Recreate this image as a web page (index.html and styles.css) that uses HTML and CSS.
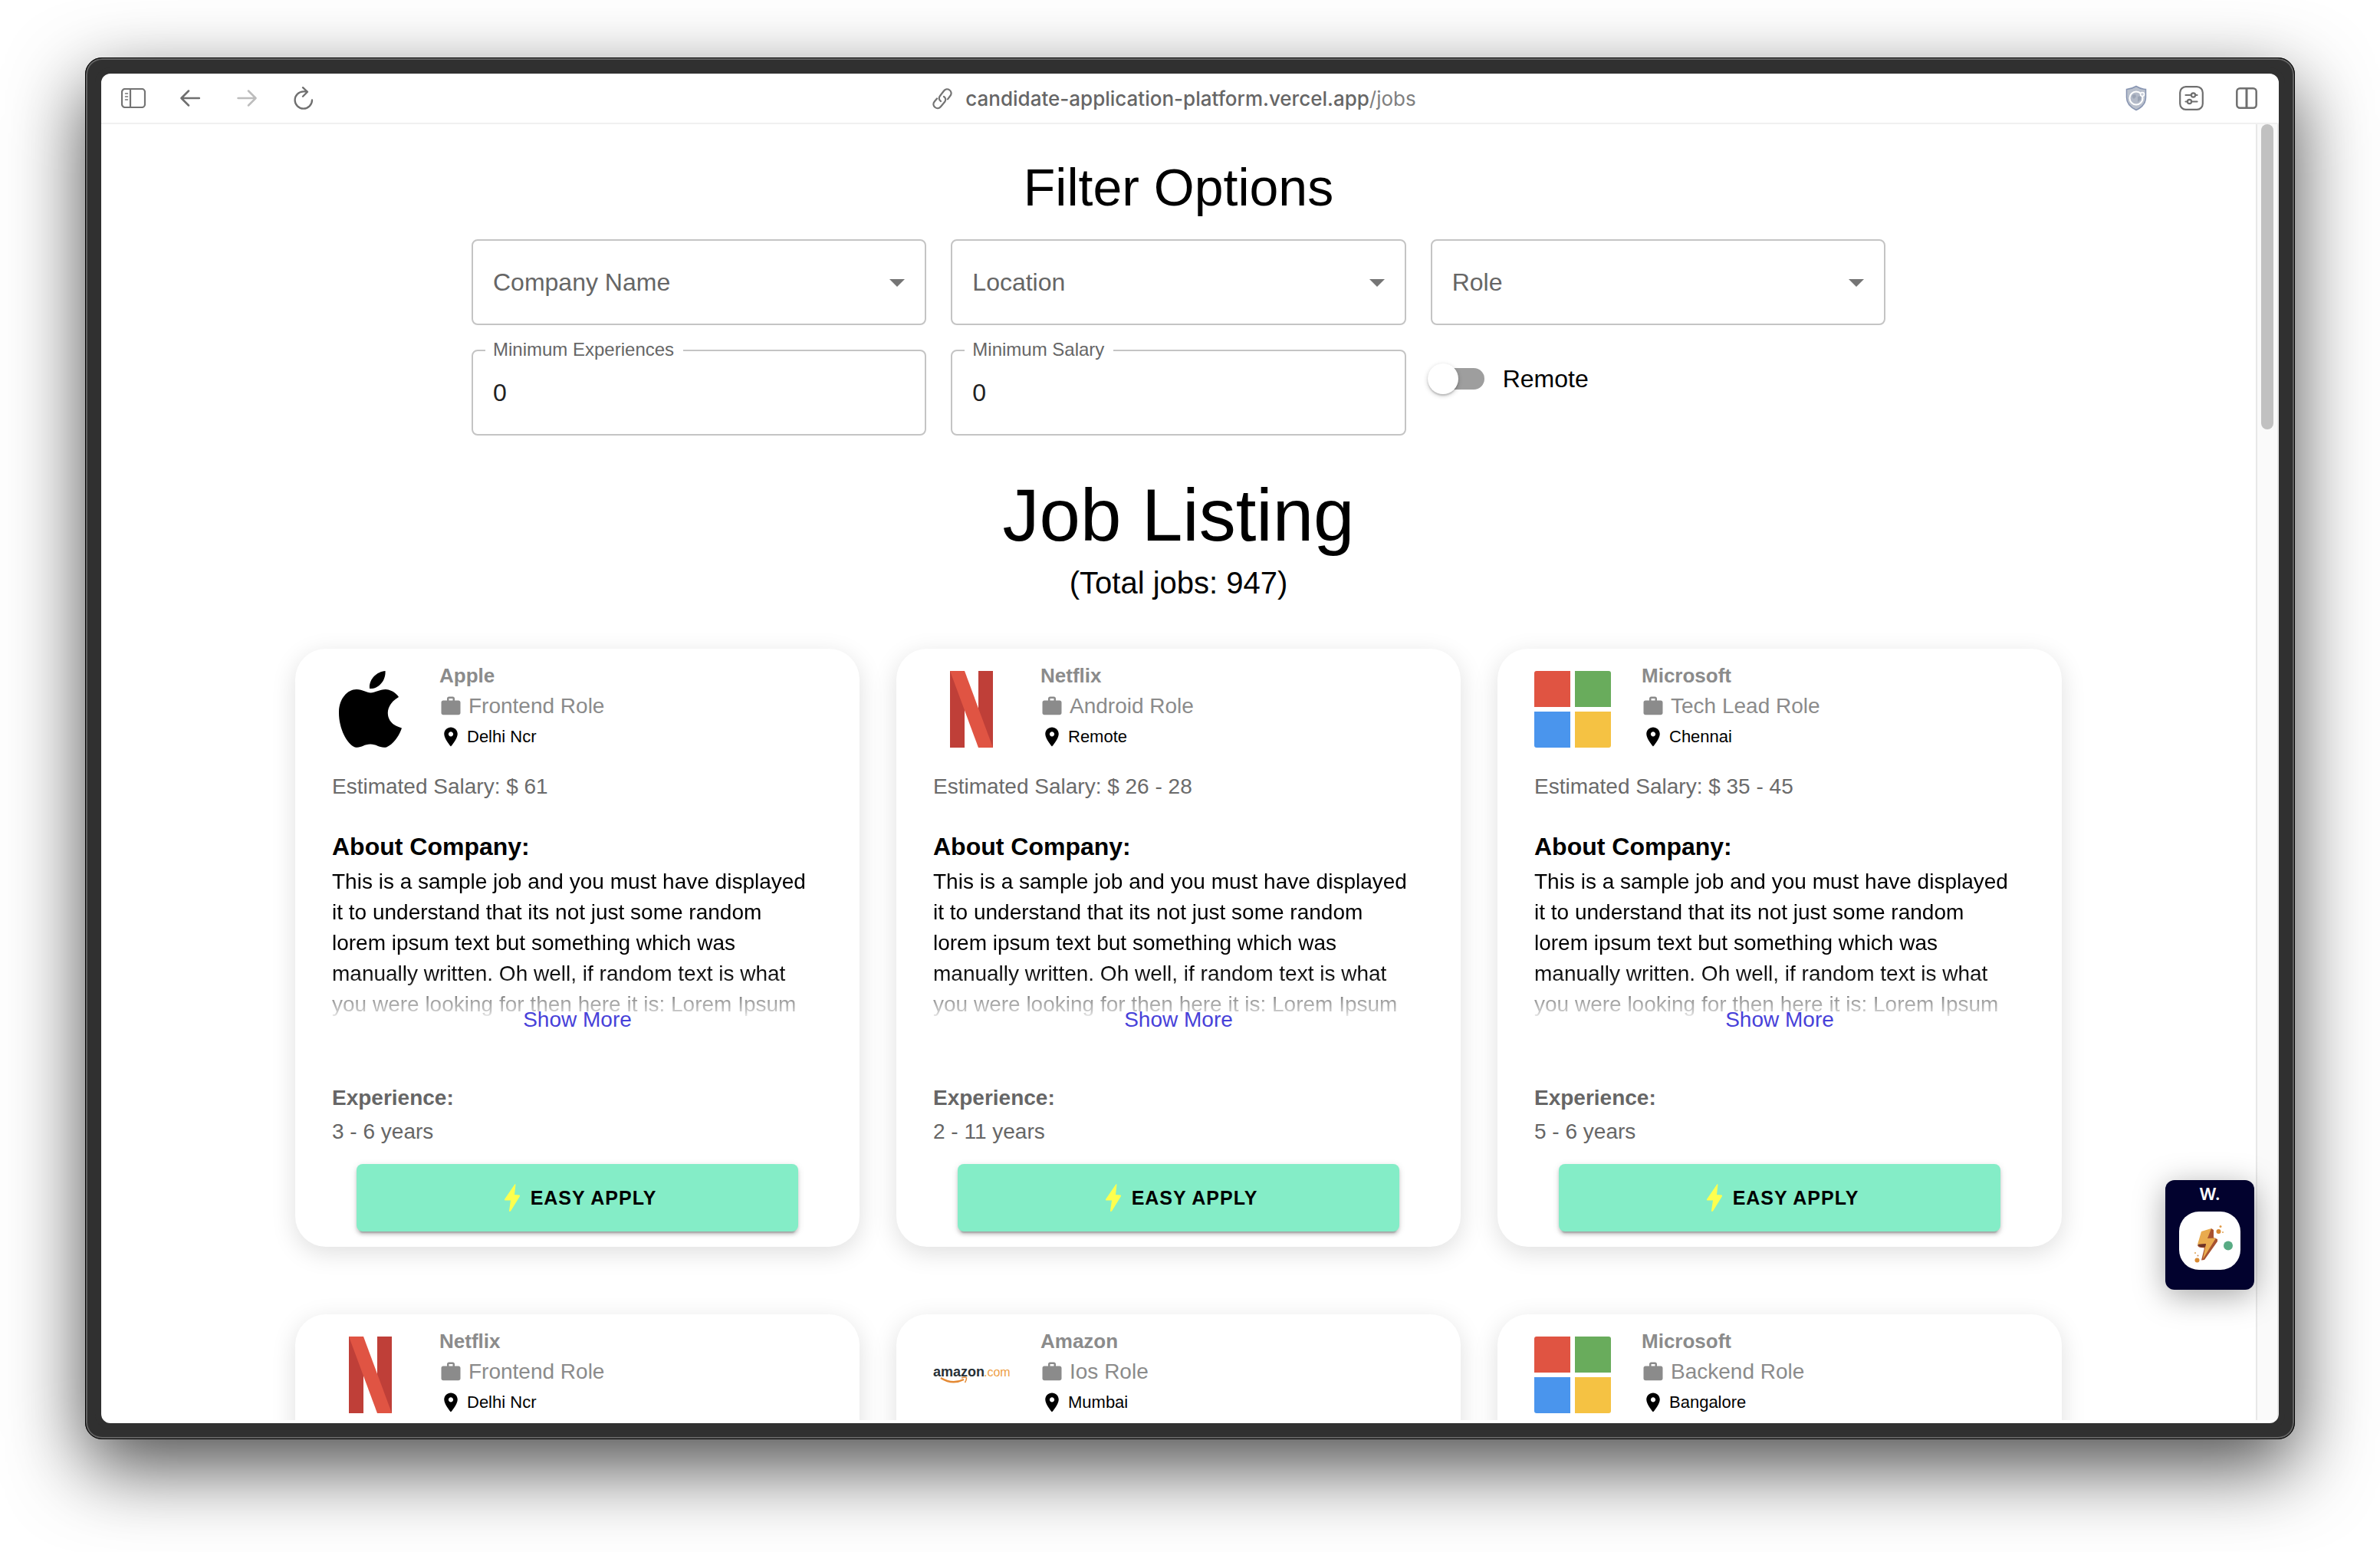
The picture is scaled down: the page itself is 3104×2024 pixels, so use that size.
FILE: index.html
```html
<!DOCTYPE html>
<html lang="en">
<head>
<meta charset="utf-8">
<title>Job Listing</title>
<link rel="stylesheet" href="styles.css">
</head>
<body>
<svg class="sprite" aria-hidden="true">
  <symbol id="work" viewBox="0 0 24 24"><path fill="currentColor" d="M20 6h-4V4c0-1.110-.89-2-2-2h-4c-1.110 0-2 .89-2 2v2H4c-1.110 0-1.990.89-1.990 2L2 19c0 1.110.89 2 2 2h16c1.110 0 2-.89 2-2V8c0-1.110-.89-2-2-2zm-6 0h-4V4h4v2z"/></symbol>
  <symbol id="pin" viewBox="0 0 24 24"><path fill="currentColor" d="M12 2C8.130 2 5 5.130 5 9c0 5.250 7 13 7 13s7-7.750 7-13c0-3.870-3.130-7-7-7zm0 9.500c-1.380 0-2.500-1.120-2.500-2.500s1.120-2.500 2.500-2.500 2.500 1.120 2.500 2.500-1.120 2.500-2.500 2.500z"/></symbol>
  <symbol id="bolt" viewBox="-8 0 36 36"><path fill="#feff4e" d="M13 1 Q13.500 0 14.500 .5 L13 14 L19.500 14.500 Q20.200 15 20 16 L8 35.500 Q6 36.500 6 35 L8 21.500 L.5 21.500 Q-.2 21 0 20 Z"/></symbol>
  <symbol id="arrow" viewBox="0 0 20 10"><path fill="#757575" d="M0 0h20L10 10z"/></symbol>
  <symbol id="apple" viewBox="0 0 100 100"><path d="M69.500 0 C70.500 13 60 24 49 23 C48 11 58 1 69.500 0Z M87 34 C75 41 71 51 73.500 60 C76 68 82 72 91 74.500 C88 84 80 96 71 99.500 C62 101 59 95.500 50 95.500 C41 95.500 38 101 30 99.500 C19 95 8.500 74 9 53 C9.500 36 20 24 32 24 C40 24 45 28.500 50.500 28.500 C56 28.500 62 24 70 24 C77 24.500 84 29 87 34Z"/></symbol>
  <symbol id="netflix" viewBox="0 0 100 100"><path fill="#bf3f38" d="M22 0h19v100H22zM59 0h19v100H59z"/><path fill="#e05443" d="M22 0h19l37 100H59z"/></symbol>
  <symbol id="microsoft" viewBox="0 0 100 100"><path fill="#e05442" d="M3 0h44v47H0V3a3 3 0 0 1 3-3z"/><path fill="#69ac5c" d="M53 0h44a3 3 0 0 1 3 3v44H53z"/><path fill="#4a95ed" d="M0 53h47v47H3a3 3 0 0 1-3-3z"/><path fill="#f5c243" d="M53 53h47v44a3 3 0 0 1-3 3H53z"/></symbol>
  <symbol id="amazon" viewBox="0 0 100 100"><text x="0" y="52" font-size="18" font-weight="700" fill="#273036">amazon</text><text x="66" y="52" font-size="16" fill="#ee9f45">.com</text><path fill="none" stroke="#e48a35" stroke-width="2.500" d="M10 54 Q25 63.500 40 56"/><path fill="none" stroke="#e48a35" stroke-width="1.500" d="M37 54 Q43 52 43.500 54 Q43.500 57 41.500 60"/></symbol>
</svg>

<div class="window">
  <header class="toolbar">
    <div class="toolbar-nav">
      <button class="tool" aria-label="Sidebar"><svg width="32" height="26" viewBox="0 0 32 26" fill="none" stroke="#737373" stroke-width="2.200"><rect x="1" y="1" width="30" height="24" rx="4"/><path d="M12 1v24"/><path stroke-width="1.500" stroke-linecap="round" d="M5.500 7h3M5.500 11h3M5.500 15h3"/></svg></button>
      <button class="tool" aria-label="Back"><svg width="26" height="22" viewBox="0 0 26 22" fill="none" stroke="#6f6f6f" stroke-width="2.500" stroke-linecap="round" stroke-linejoin="round"><path d="M25 11H2M11 1.500L1.500 11l9.500 9.500"/></svg></button>
      <button class="tool" aria-label="Forward"><svg width="26" height="22" viewBox="0 0 26 22" fill="none" stroke="#bdbdbd" stroke-width="2.500" stroke-linecap="round" stroke-linejoin="round"><path d="M1.500 11H24M15 1.500L24.500 11 15 20.500"/></svg></button>
      <button class="tool" aria-label="Reload"><svg width="26" height="30" viewBox="0 0 26 30" fill="none" stroke="#6f6f6f" stroke-width="2.300" stroke-linecap="round" stroke-linejoin="round"><path d="M24 17.500a11.200 11.200 0 1 1-11.200-11.200h5M12 1.200l6 5.600-6 6"/></svg></button>
    </div>
    <div class="address">
      <svg width="28" height="28" viewBox="0 0 28 28" fill="none" stroke="#747474" stroke-width="2.200" stroke-linecap="round"><path d="M12 17c-2.500-1.500-3-4.500-1-7l5-6.500c2-2.500 5-3 7.500-1s2.800 5 .8 7.500l-3.300 4.300M16 11c2.500 1.500 3 4.500 1 7l-5 6c-2 2.500-5 3-7.500 1s-2.800-5-.8-7.500l3.300-4"/></svg>
      <span><span class="host">candidate-application-platform.vercel.app</span>/jobs</span>
    </div>
    <div class="toolbar-tools">
      <button class="tool" aria-label="Privacy"><svg width="28" height="34" viewBox="0 0 28 34"><path fill="#b9c0cd" stroke="#8794b1" stroke-width="1.500" d="M14 1.500C18 4 22 5 26.500 5.500V16c0 8-5 13-12.500 16.500C6.500 29 1.500 24 1.500 16V5.500C6 5 10 4 14 1.500z"/><circle cx="14" cy="17" r="8.500" fill="#b3bac8" stroke="#fff" stroke-width="2"/><path fill="#9ba4b5" d="M9 13l4-1 1 3-3 3-2-2zM16 15l4-1v5l-4 3z"/><circle cx="22" cy="12" r="2.500" fill="#c4cad5" stroke="#fff" stroke-width="1.500"/></svg></button>
      <button class="tool" aria-label="Page settings"><svg width="32" height="32" viewBox="0 0 32 32" fill="none" stroke="#6f6f6f" stroke-width="2.200" stroke-linecap="round"><rect x="1.200" y="1.200" width="29.600" height="29.600" rx="7.500"/><path d="M8.500 12h7M21.500 12h2M8.500 20.500h2M16.500 20.500h7"/><circle cx="18.500" cy="12" r="2.600"/><circle cx="13.500" cy="20.500" r="2.600"/></svg></button>
      <button class="tool" aria-label="Split view"><svg width="28" height="28" viewBox="0 0 28 28" fill="none" stroke="#6f6f6f" stroke-width="2.500"><rect x="1.300" y="1.300" width="25.400" height="25.400" rx="4"/><path stroke-width="3" d="M14 2v24"/></svg></button>
    </div>
  </header>

  <div class="viewport">
    <main class="page">
      <h1 class="filter-title">Filter Options</h1>
      <form class="filters">
        <div class="field">
          <select class="control select" aria-label="Company Name"><option>Company Name</option></select>
          <svg class="select-arrow"><use href="#arrow"/></svg>
        </div>
        <div class="field">
          <select class="control select" aria-label="Location"><option>Location</option></select>
          <svg class="select-arrow"><use href="#arrow"/></svg>
        </div>
        <div class="field">
          <select class="control select" aria-label="Role"><option>Role</option></select>
          <svg class="select-arrow"><use href="#arrow"/></svg>
        </div>
        <div class="field">
          <input class="control" id="experience" type="text" value="0">
          <label class="field-label" for="experience">Minimum Experiences</label>
        </div>
        <div class="field">
          <input class="control" id="salary" type="text" value="0">
          <label class="field-label" for="salary">Minimum Salary</label>
        </div>
        <label class="switch-row" for="remote"><input class="switch" id="remote" type="checkbox">Remote</label>
      </form>

      <h2 class="listing-title">Job Listing</h2>
      <p class="listing-total">(Total jobs: 947)</p>

      <section class="jobs">
        <article class="card">
          <div class="card-head">
            <svg class="logo"><use href="#apple"/></svg>
            <div>
              <h3 class="company">Apple</h3>
              <p class="role"><svg class="glyph"><use href="#work"/></svg>Frontend Role</p>
              <p class="place"><svg class="glyph"><use href="#pin"/></svg>Delhi Ncr</p>
            </div>
          </div>
          <p class="salary">Estimated Salary: $ 61</p>
          <h4 class="about">About Company:</h4>
          <p class="summary">This is a sample job and you must have displayed<br>it to understand that its not just some random<br>lorem ipsum text but something which was<br>manually written. Oh well, if random text is what<br>you were looking for then here it is: Lorem Ipsum</p>
          <a class="more" href="#">Show More</a>
          <h4 class="exp-title">Experience:</h4>
          <p class="exp">3 - 6 years</p>
          <button class="apply"><svg width="36" height="36"><use href="#bolt"/></svg>EASY APPLY</button>
        </article>

        <article class="card">
          <div class="card-head">
            <svg class="logo"><use href="#netflix"/></svg>
            <div>
              <h3 class="company">Netflix</h3>
              <p class="role"><svg class="glyph"><use href="#work"/></svg>Android Role</p>
              <p class="place"><svg class="glyph"><use href="#pin"/></svg>Remote</p>
            </div>
          </div>
          <p class="salary">Estimated Salary: $ 26 - 28</p>
          <h4 class="about">About Company:</h4>
          <p class="summary">This is a sample job and you must have displayed<br>it to understand that its not just some random<br>lorem ipsum text but something which was<br>manually written. Oh well, if random text is what<br>you were looking for then here it is: Lorem Ipsum</p>
          <a class="more" href="#">Show More</a>
          <h4 class="exp-title">Experience:</h4>
          <p class="exp">2 - 11 years</p>
          <button class="apply"><svg width="36" height="36"><use href="#bolt"/></svg>EASY APPLY</button>
        </article>

        <article class="card">
          <div class="card-head">
            <svg class="logo"><use href="#microsoft"/></svg>
            <div>
              <h3 class="company">Microsoft</h3>
              <p class="role"><svg class="glyph"><use href="#work"/></svg>Tech Lead Role</p>
              <p class="place"><svg class="glyph"><use href="#pin"/></svg>Chennai</p>
            </div>
          </div>
          <p class="salary">Estimated Salary: $ 35 - 45</p>
          <h4 class="about">About Company:</h4>
          <p class="summary">This is a sample job and you must have displayed<br>it to understand that its not just some random<br>lorem ipsum text but something which was<br>manually written. Oh well, if random text is what<br>you were looking for then here it is: Lorem Ipsum</p>
          <a class="more" href="#">Show More</a>
          <h4 class="exp-title">Experience:</h4>
          <p class="exp">5 - 6 years</p>
          <button class="apply"><svg width="36" height="36"><use href="#bolt"/></svg>EASY APPLY</button>
        </article>

        <article class="card">
          <div class="card-head">
            <svg class="logo"><use href="#netflix"/></svg>
            <div>
              <h3 class="company">Netflix</h3>
              <p class="role"><svg class="glyph"><use href="#work"/></svg>Frontend Role</p>
              <p class="place"><svg class="glyph"><use href="#pin"/></svg>Delhi Ncr</p>
            </div>
          </div>
        </article>

        <article class="card">
          <div class="card-head">
            <svg class="logo"><use href="#amazon"/></svg>
            <div>
              <h3 class="company">Amazon</h3>
              <p class="role"><svg class="glyph"><use href="#work"/></svg>Ios Role</p>
              <p class="place"><svg class="glyph"><use href="#pin"/></svg>Mumbai</p>
            </div>
          </div>
        </article>

        <article class="card">
          <div class="card-head">
            <svg class="logo"><use href="#microsoft"/></svg>
            <div>
              <h3 class="company">Microsoft</h3>
              <p class="role"><svg class="glyph"><use href="#work"/></svg>Backend Role</p>
              <p class="place"><svg class="glyph"><use href="#pin"/></svg>Bangalore</p>
            </div>
          </div>
        </article>
      </section>
    </main>

    <aside class="widget">
      <span class="widget-name">W.</span>
      <svg width="80" height="76" viewBox="0 0 80 76">
        <rect width="80" height="76" rx="26" fill="#fff"/>
        <path fill="#a8522f" d="M42 22l3 2v10l5 2v3L33 63l-4 .5 4-16-7-1-2-2z"/>
        <path fill="#e9ab4e" d="M29 26l13-4-5 13 11-.5L31 62l4-20-11 1z"/>
        <path fill="#6d3427" d="M24 43l11-1-1 4-6 .5z"/>
        <circle cx="51.500" cy="26" r="3" fill="#d98a32"/><circle cx="54" cy="19.500" r="1.500" fill="#e09a48"/><circle cx="57" cy="27" r="1" fill="#e0a050"/>
        <circle cx="23.500" cy="63.500" r="3" fill="#d98a32"/><circle cx="21" cy="54" r="1" fill="#e0a050"/><circle cx="24.500" cy="57.500" r="1" fill="#c98a58"/>
        <circle cx="64" cy="44.500" r="6" fill="#58ab84"/>
      </svg>
    </aside>

    <div class="scrollbar"><div class="thumb"></div></div>
  </div>
</div>
</body>
</html>
```
FILE: styles.css
```css
* { box-sizing: border-box; }

body {
  margin: 0;
  height: 100vh;
  padding: 75px 111px 147px;
  background: #fff;
  color: #000;
  font-family: "Liberation Sans", Arial, sans-serif;
  overflow: hidden;
}

h1, h2, h3, h4, p { margin: 0; font-weight: 400; }
button, input, select { font: inherit; }
.sprite { position: absolute; width: 0; height: 0; }

/* Browser window */
.window {
  display: flex;
  flex-direction: column;
  height: 100%;
  padding-bottom: 4px;
  border: 21px solid #303030;
  border-radius: 22px;
  background: #fff;
  box-shadow: 0 36px 100px rgba(0, 0, 0, .7);
  position: relative;
}
.window::before,
.window::after {
  content: "";
  position: absolute;
  pointer-events: none;
}
.window::before {
  inset: -21px;
  border: 1px solid #000;
  border-radius: 22px;
  box-shadow: inset 0 0 0 2px #626262;
}
.window::after {
  inset: -8px;
  border: 8px solid #303030;
  border-radius: 20px;
}

.toolbar {
  display: grid;
  grid-template-columns: 1fr auto 1fr;
  align-items: center;
  height: 66px;
  padding: 0 25px;
  border-bottom: 2px solid #f0f0f0;
}
.toolbar-nav, .toolbar-tools { display: flex; align-items: center; }
.toolbar-nav { gap: 40px; }
.toolbar-tools { gap: 38px; justify-content: flex-end; }
.tool {
  display: flex;
  justify-content: center;
  width: 34px;
  padding: 0;
  border: 0;
  background: none;
}
.address {
  display: flex;
  align-items: center;
  gap: 16px;
  padding: 2px 42px 0 0;
  color: #808080;
  font-family: Inter, sans-serif;
  font-size: 26px;
  line-height: 32px;
}
.host { color: #666; font-weight: 500; }

.viewport {
  position: relative;
  display: flex;
  flex: 1;
  min-height: 0;
  overflow: hidden;
}
.page {
  flex: 1;
  padding: 40px 48px 0;
}
.scrollbar {
  width: 30px;
  height: 100%;
  border: solid #e8e8e8;
  border-width: 0 2px;
  background: #fafafa;
}
.thumb {
  width: 16px;
  height: 398px;
  margin: 0 auto;
  border-radius: 8px;
  background: #c1c1c1;
}

/* Filters */
.filter-title {
  font-size: 68px;
  line-height: 84px;
  text-align: center;
}
.filters {
  display: grid;
  grid-template-columns: repeat(3, 1fr);
  gap: 32px;
  max-width: 1844px;
  margin: 26px auto 0;
}
.field { position: relative; }
.control {
  display: block;
  width: 100%;
  height: 112px;
  padding: 0 26px;
  border: 2px solid #c4c4c4;
  border-radius: 8px;
  background: #fff;
  color: #222;
  font-size: 32px;
}
.select {
  appearance: none;
  color: #666;
}
.select-arrow {
  position: absolute;
  top: 52px;
  right: 28px;
  width: 20px;
  height: 10px;
  pointer-events: none;
}
.field-label {
  position: absolute;
  top: -16px;
  left: 18px;
  padding: 0 12px 0 10px;
  background: #fff;
  color: #666;
  font-size: 24px;
  line-height: 32px;
}
.switch-row {
  display: flex;
  align-items: center;
  gap: 24px;
  height: 76px;
  font-size: 32px;
}
.switch {
  position: relative;
  appearance: none;
  width: 68px;
  height: 28px;
  margin: 0 0 0 2px;
  border-radius: 14px;
  background: #9e9e9e;
}
.switch::before {
  content: "";
  position: absolute;
  top: -6px;
  left: -6px;
  width: 40px;
  height: 40px;
  border-radius: 50%;
  background: #fff;
  box-shadow: 0 2px 6px rgba(0, 0, 0, .2), 0 2px 2px rgba(0, 0, 0, .16);
}

/* Listing */
.listing-title {
  margin-top: 48px;
  font-size: 96px;
  line-height: 112px;
  text-align: center;
}
.listing-total {
  margin-top: 2px;
  font-size: 40px;
  line-height: 60px;
  text-align: center;
}
.jobs {
  display: grid;
  grid-template-columns: repeat(3, 1fr);
  grid-auto-rows: 1fr;
  gap: 88px 48px;
  max-width: 2304px;
  margin: 56px auto 0;
}
.card {
  display: flex;
  flex-direction: column;
  padding: 15px 48px 20px;
  border-radius: 40px;
  background: #fff;
  box-shadow: 0 8px 32px rgba(0, 0, 0, .13);
  font-size: 28px;
  line-height: 40px;
}
.card-head { display: flex; gap: 40px; }
.logo { width: 100px; height: 100px; margin-top: 14px; }
.company { color: #8b8b8b; font-size: 26px; font-weight: 700; }
.role, .place { display: flex; align-items: center; }
.role { gap: 8px; color: #8b8b8b; }
.place { gap: 6px; font-size: 22px; }
.glyph { width: 30px; height: 30px; }
.salary { margin-top: 25px; color: #6b6b6b; }
.about {
  margin: 36px 0 4px;
  font-size: 32px;
  font-weight: 700;
  line-height: 44px;
}
.summary {
  height: 200px;
  white-space: nowrap;
  overflow: hidden;
  -webkit-mask-image: linear-gradient(#000 65%, rgba(0, 0, 0, .85) 75%, rgba(0, 0, 0, .4) 87%, rgba(0, 0, 0, .2) 95%, transparent);
  mask-image: linear-gradient(#000 65%, rgba(0, 0, 0, .85) 75%, rgba(0, 0, 0, .4) 87%, rgba(0, 0, 0, .2) 95%, transparent);
}
.more {
  align-self: center;
  margin-top: -20px;
  color: #4741d9;
  text-decoration: none;
}
.exp-title { margin-top: 60px; color: #666; font-weight: 700; line-height: 44px; }
.exp { color: #666; line-height: 44px; }
.apply {
  display: flex;
  align-items: center;
  justify-content: center;
  gap: 6px;
  height: 88px;
  margin: 20px 32px 0;
  border: 0;
  border-radius: 8px;
  background: #84edc7;
  color: #000;
  font-size: 25px;
  font-weight: 700;
  letter-spacing: 1px;
  box-shadow: 0 6px 2px -4px rgba(0, 0, 0, .2), 0 4px 4px rgba(0, 0, 0, .14), 0 2px 10px rgba(0, 0, 0, .12);
}

/* Floating badge */
.widget {
  position: absolute;
  right: 32px;
  bottom: 170px;
  display: flex;
  flex-direction: column;
  align-items: center;
  gap: 9px;
  width: 116px;
  height: 143px;
  padding-top: 4px;
  border-radius: 12px;
  background: #02022e;
  box-shadow: 0 8px 40px rgba(0, 0, 0, .35);
}
.widget-name {
  color: #fff;
  font-family: Inter, sans-serif;
  font-size: 22px;
  font-weight: 600;
  line-height: 28px;
}
```
